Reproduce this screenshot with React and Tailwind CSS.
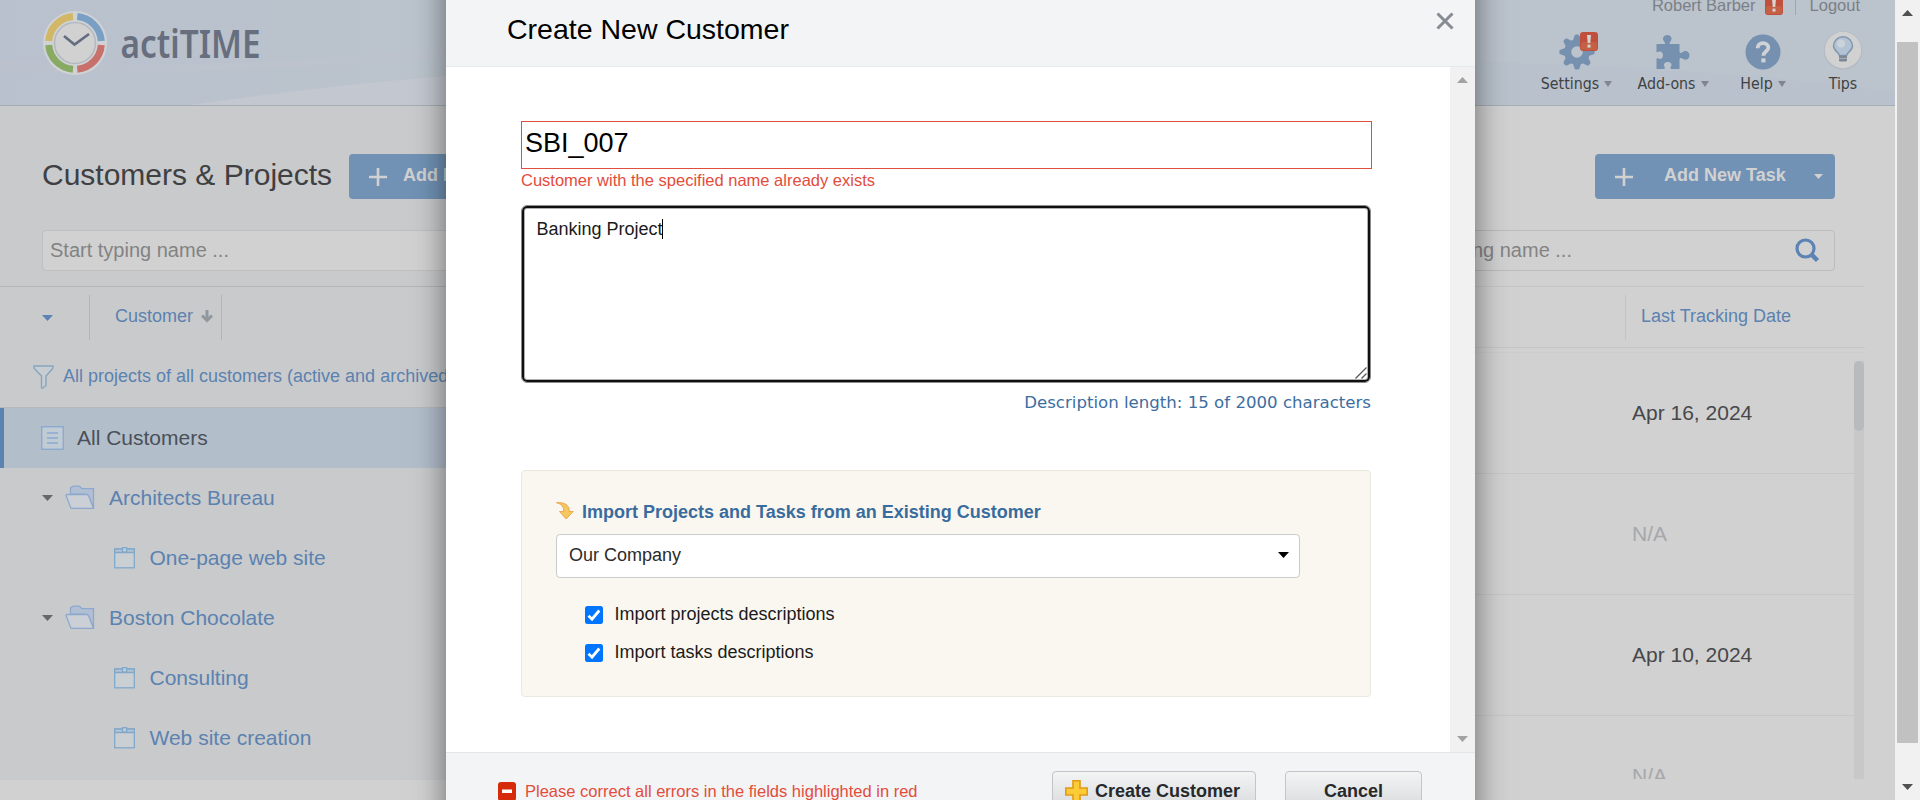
import React from "react";

const Tri = ({ w = 11, h = 6, color = "#5b84b5", up = false }) => (
  <svg width={w} height={h} viewBox="0 0 11 6" preserveAspectRatio="none" className="block shrink-0">
    <path d={up ? "M0 6L5.5 0L11 6Z" : "M0 0H11L5.5 6Z"} fill={color} />
  </svg>
);

const Logo = () => (
  <svg width="240" height="86" viewBox="0 0 240 86" className="block overflow-visible">
    <circle cx="32" cy="35" r="32" fill="#d0d3d5" />
    <g fill="none" strokeWidth="7">
      <path d="M34.3 8.6A26.4 26.4 0 0 1 58.3 33" stroke="#79a0c4" />
      <path d="M58.3 37A26.4 26.4 0 0 1 34.3 61.3" stroke="#c8706b" />
      <path d="M30 61.3A26.4 26.4 0 0 1 5.7 37" stroke="#89aa63" />
      <path d="M5.7 33A26.4 26.4 0 0 1 30 8.6" stroke="#d2b766" />
    </g>
    <circle cx="32" cy="35" r="20.5" fill="#d1d1d1" stroke="#b3b8bf" strokeWidth="1.5" />
    <path d="M21 28L31.5 36.5L46 26" fill="none" stroke="#626d80" strokeWidth="2.6" />
    <text x="77.5" y="50" fontFamily="'Noto Sans', sans-serif" fontWeight="600" fontSize="40.5" textLength="140" lengthAdjust="spacingAndGlyphs" fill="#676e7e">
      actiTIME
    </text>
  </svg>
);

const Alert = () => (
  <svg width="18" height="19" viewBox="0 0 18 19" className="block">
    <rect width="18" height="19" rx="3" fill="#c0503d" />
    <rect y="10" x="1" width="16" height="8" rx="2" fill="#c46044" />
    <path d="M7 3H11L10.3 11H7.7Z" fill="#d6d2d0" />
    <rect x="7.5" y="12.6" width="3" height="3" fill="#d6d2d0" />
  </svg>
);

const Gear = () => (
  <svg width="36" height="36" viewBox="-18 -18 36 36" className="block">
    <g fill="#7690af">
      {[0, 45, 90, 135, 180, 225, 270, 315].map((a) => (
        <path key={a} transform={`rotate(${a})`} d="M-4.6 -10L-2.6 -16Q-2.2 -17.6 -1 -17.6H1Q2.2 -17.6 2.6 -16L4.6 -10Z" />
      ))}
    </g>
    <circle r="9.3" fill="none" stroke="#7690af" strokeWidth="7" />
  </svg>
);

const Puzzle = () => (
  <svg width="34" height="36" viewBox="0 0 34 36" className="block">
    <path
      fill="#7690af"
      d="M0.5 10H8.6C9.8 10 9 8.3 8 7.2C5.6 4.2 8 1 11.3 1S17 4.2 14.6 7.2C13.6 8.3 12.8 10 14 10H23.5V17.6C23.5 19.4 25.4 19 26.4 18.2C29.4 15.8 33.5 17.6 33.5 21.4S29.4 27 26.4 24.6C25.4 23.8 23.5 23.6 23.5 25.4V35H15.4C14.2 35 14.4 33.6 15 32.6C16.6 30 14.2 28 11.8 28S6.8 30 8.4 32.6C9 33.6 9.2 35 8 35H0.5V25C0.5 24 1.6 24.2 2.6 24.6C5.2 25.8 7 23.6 7 21.2S5 16.6 2.6 17.8C1.6 18.2 0.5 18.6 0.5 17.6Z"
    />
  </svg>
);

const HelpIcon = () => (
  <svg width="36" height="36" viewBox="0 0 36 36" className="block">
    <circle cx="18" cy="18" r="17.5" fill="#7690af" />
    <path d="M12.6 14.3C12.6 10.8 15 9.2 18 9.2S23.4 11 23.4 13.8C23.4 17.2 18.4 17.4 18.4 21.8" fill="none" stroke="#d0d3d5" strokeWidth="3.8" />
    <rect x="16.3" y="24.4" width="4.2" height="4" fill="#d0d3d5" />
  </svg>
);

const Bulb = () => (
  <svg width="40" height="40" viewBox="0 0 40 40" className="-mt-[3px] block">
    <circle cx="20" cy="20.5" r="19.2" fill="#b3bac1" />
    <circle cx="20" cy="20" r="18.2" fill="#d1d1d1" />
    <path d="M16.4 25.5C16 22.5 10.5 20.5 10.5 16A9.5 9.2 0 0 1 29.5 16C29.5 20.5 24 22.5 23.6 25.5Z" fill="#b4c3d3" stroke="#8098b0" strokeWidth="1.5" />
    <circle cx="18" cy="13.5" r="4" fill="#cbd3da" />
    <rect x="16" y="25.5" width="8" height="6" rx="1" fill="#7c8894" />
    <path d="M16 28.5H24" stroke="#a5adb5" />
  </svg>
);

const Plus = () => (
  <svg width="18" height="18" viewBox="0 0 18 18" className="block shrink-0">
    <path d="M9 0V18M0 9H18" stroke="#d1d1d1" strokeWidth="2.6" />
  </svg>
);

const Folder = () => (
  <svg width="30" height="25" viewBox="0 0 30 25" className="block shrink-0">
    <path d="M5.5 9V4Q5.5 1.700 7.5 1.700L8.5 1.2H14.5L17 3.600H28.5V23.4L24 12L22 9.3Z" fill="#b1bfd3" stroke="#8fa8cf" strokeWidth="1.3" />
    <path d="M1 10.5Q1 9.5 2 9.5H21.5Q23 9.5 23.6 10.7L28.5 23.4H6Z" fill="#cad0d6" stroke="#8fa8cf" strokeWidth="1.3" />
  </svg>
);

const Clip = () => (
  <svg width="21" height="22" viewBox="0 0 21 22" className="block shrink-0">
    <rect x="0.7" y="2" width="19.6" height="18.8" fill="#cacfd3" stroke="#82a8c9" strokeWidth="1.3" />
    <path d="M0.7 2H20.3V5.5H0.7Z" fill="#b2c4d3" stroke="#82a8c9" strokeWidth="1.3" />
    <rect x="8.5" y="0.7" width="4.2" height="4.3" fill="#c4ced6" stroke="#82a8c9" strokeWidth="1.3" />
  </svg>
);

const NavItem = ({ label, icon, w, arrow = true }) => (
  <div className={`flex flex-col items-center ${w}`}>
    <div className="flex h-10 items-center pt-[3px]">{icon}</div>
    <div className="mt-0.5 flex items-center gap-[5px] font-['DejaVu_Sans_Condensed','DejaVu_Sans',sans-serif] text-[15.8px] leading-[24px] whitespace-nowrap text-[#3f4144]">
      {label}
      {arrow && <Tri w={8} h={6} color="#80868d" />}
    </div>
  </div>
);

const Header = () => (
  <header className="relative h-[106px] overflow-hidden border-b border-[#a6adb5] bg-[#bbc3cc]">
    <svg className="absolute inset-0 h-[105px] w-[1895px]" viewBox="0 0 1895 105">
      <rect width="420" height="105" fill="url(#hg)" />
      <path d="M0 60Q250 72 446 47L560 40V62L446 57Q250 76 0 72Z" fill="#c0c4ce" opacity=".5" />
      <path d="M190 105Q320 86 446 76L600 66V105Z" fill="#c3c7cf" />
      <path d="M1475 62Q1700 66 1895 92V105H1475Z" fill="#b8c1cb" opacity=".6" />
      <defs>
        <linearGradient id="hg">
          <stop offset="0" stopColor="#b8c1cd" />
          <stop offset="1" stopColor="#bbc3cc" />
        </linearGradient>
      </defs>
    </svg>
    <div className="relative flex justify-between">
      <div className="pt-2 pl-[43px]">
        <Logo />
      </div>
      <div className="flex flex-col pr-[35px]">
        <div className="-mt-[7px] flex h-[24px] items-center justify-end text-[16.5px] text-[#7b8087]">
          <span>Robert Barber</span>
          <span className="ml-[9px]">
            <Alert />
          </span>
          <span className="ml-[12px] h-5 w-px bg-[#a2a6ab]" />
          <span className="ml-[14px]">Logout</span>
        </div>
        <div className="mt-[13px] flex pr-[2px]">
          <NavItem
            label="Settings"
            w="w-[71px]"
            icon={
              <div className="relative">
                <Gear />
                <span className="absolute -top-[2px] left-[21px]">
                  <Alert />
                </span>
              </div>
            }
          />
          <NavItem label="Add-ons" w="ml-[25px] w-[72px]" icon={<Puzzle />} />
          <NavItem label="Help" w="ml-[32px] w-[44px]" icon={<HelpIcon />} />
          <NavItem label="Tips" w="ml-[43px] w-[30px]" arrow={false} icon={<Bulb />} />
        </div>
      </div>
    </div>
  </header>
);

const tree = [
  { type: "folder", label: "Architects Bureau" },
  { type: "project", label: "One-page web site" },
  { type: "folder", label: "Boston Chocolate" },
  { type: "project", label: "Consulting" },
  { type: "project", label: "Web site creation" },
];

const LeftPanel = () => (
  <section className="h-[674px] w-[900px] shrink-0 bg-[#c9cacc]">
    <div className="flex h-[93px] items-end pl-[42px]">
      <h1 className="w-[307px] pb-[2px] text-[30px] leading-[45px] text-[#3f4041]">Customers &amp; Projects</h1>
      <button className="flex h-[45px] w-[220px] items-center rounded bg-[#7192b5] pl-[20px] text-[18px] font-bold text-[#d1d1d1]">
        <Plus />
        <span className="ml-[16px] pb-[2px]">Add New</span>
      </button>
    </div>
    <div className="mt-[31px] ml-[42px] flex h-[41px] w-[460px] items-center rounded border border-[#bebfc0] bg-[#d1d1d1] pb-[2px] pl-[7px] text-[20px] text-[#838383]">
      Start typing name ...
    </div>
    <div className="mt-[15px] flex h-[61px] items-start border-t border-[#b4b5b7] pt-2 text-[18px] text-[#5b82b0]">
      <div className="flex h-[45px] w-[90px] items-center border-r border-[#b3b4b6] pl-[42px]">
        <Tri />
      </div>
      <div className="flex h-[45px] w-[132px] items-center justify-end gap-[8px] border-r border-[#b3b4b6] pr-2 pb-[2px]">
        Customer
        <svg width="12" height="13" viewBox="0 0 12 13">
          <path d="M6 0V10M1 5.5L6 10.5L11 5.5" fill="none" stroke="#90979e" strokeWidth="3" />
        </svg>
      </div>
    </div>
    <div className="flex h-[61px] items-center border-b border-[#b6b8ba] pb-[1px] pl-[33px] text-[18px] whitespace-nowrap text-[#5b82b0]">
      <svg width="21" height="24" viewBox="0 0 21 24" className="mr-[9px]">
        <path d="M1 1H20Q20.3 3 19 4.2L13 11V20.5L9.5 23.2Q8.5 23.5 8.5 22V11L2 4.2Q0.7 3 1 1Z" fill="#c7cdd1" stroke="#86a5bd" strokeWidth="1.4" />
      </svg>
      All projects of all customers (active and archived)
    </div>
    <div className="flex h-[60px] items-center border-l-4 border-[#5b83b1] bg-[#b3becb] pl-[37px] text-[21px] text-[#4a5058]">
      <svg width="23" height="24" viewBox="0 0 23 24" className="mr-[13px]">
        <rect x="0.7" y="0.7" width="21.6" height="22.6" fill="#c0cbd5" stroke="#8ca9d0" strokeWidth="1.4" />
        <path d="M6 7H17M6 12H17M6 17H17" stroke="#8ca9d0" strokeWidth="1.4" />
      </svg>
      <span className="pb-[1px]">All Customers</span>
    </div>
    {tree.map((n) => (
      <div key={n.label} className="flex h-[60px] items-center pb-[1px] text-[21px] text-[#5b82b0]">
        {n.type === "folder" ? (
          <div className="flex items-center pl-[42px]">
            <Tri color="#66686a" />
            <span className="mr-[14px] ml-[12px]">
              <Folder />
            </span>
            {n.label}
          </div>
        ) : (
          <div className="flex items-center pl-[114px]">
            <Clip />
            <span className="ml-[14.5px]">{n.label}</span>
          </div>
        )}
      </div>
    ))}
  </section>
);

const dates = ["Apr 16, 2024", "N/A", "Apr 10, 2024", "N/A"];

const RightPanel = () => (
  <section className="h-[694px] w-[995px] bg-[#d1d1d1]">
    <div className="flex h-[93px] items-end justify-end pr-[60px]">
      <button className="flex h-[45px] w-[240px] items-center rounded bg-[#7192b5] pr-3 pl-[20px] text-[18px] font-bold text-[#d1d1d1]">
        <Plus />
        <span className="ml-[31px] flex-1 pb-[2px] text-left whitespace-nowrap">Add New Task</span>
        <Tri w={9} h={5} color="#d1d1d1" />
      </button>
    </div>
    <div className="mt-[31px] ml-[485px] flex h-[41px] w-[450px] items-center justify-between rounded border border-[#bcbcbc] pr-[14px] pb-[1px] pl-[7px] text-[20px] text-[#838383]">
      Start typing name ...
      <svg width="25" height="25" viewBox="0 0 25 25" className="mt-[1px]">
        <circle cx="10.5" cy="10.5" r="8.5" fill="none" stroke="#5b84b5" strokeWidth="3.2" />
        <path d="M16.5 16.5L22.5 22.5" stroke="#5b84b5" strokeWidth="4.5" />
      </svg>
    </div>
    <div className="mt-[15px] mr-[30px] flex h-[62px] items-start justify-end border-y border-[#c6c6c6] pt-2">
      <div className="flex h-[45px] w-[240px] items-center border-l border-[#c3c3c3] pb-[2px] pl-[15px] text-[18px] text-[#5b82b0]">Last Tracking Date</div>
    </div>
    <div className="mt-1 mr-[31px] flex h-[427px] overflow-hidden border-t border-[#cdcdcd]">
      <div className="flex-1">
        {dates.map((d, i) => (
          <div key={i} className="flex h-[121px] items-center justify-end border-b border-[#c7c7c7]">
            <span className={`w-[222px] pb-px text-[21px] ${d === "N/A" ? "text-[#a6a7ac]" : "text-[#47484a]"}`}>{d}</span>
          </div>
        ))}
      </div>
      <div className="mt-2 w-2.5 bg-[#c8c8c8]">
        <div className="h-[70px] rounded-full bg-[#b7bbbe]" />
      </div>
    </div>
  </section>
);

const Check = ({ label }) => (
  <label className="flex h-[38px] items-center gap-[11.5px] text-[18px] text-[#1b1b1b]">
    <svg width="18" height="18" viewBox="0 0 18 18">
      <rect width="18" height="18" rx="2.5" fill="#0075ff" />
      <path d="M3.5 9.8L7 13.2L14.3 4.5" fill="none" stroke="#fff" strokeWidth="2.8" />
    </svg>
    <span className="pb-px">{label}</span>
  </label>
);

const Modal = () => (
  <div className="absolute top-0 left-[446px] flex h-[800px] w-[1029px] flex-col overflow-hidden bg-white">
    <div className="flex h-[67px] shrink-0 items-start justify-between border-b border-[#e5e9ea] bg-[#f3f4f6] pr-[21px] pl-[61px]">
      <h2 className="pt-[8.5px] text-[28.5px] leading-[40px] text-black">Create New Customer</h2>
      <svg width="18" height="18" viewBox="0 0 18 18" className="mt-3">
        <path d="M1.5 1.5L16.5 16.5M16.5 1.5L1.5 16.5" stroke="#868b94" strokeWidth="3" />
      </svg>
    </div>
    <div className="flex h-[685px] shrink-0">
      <div className="w-[1004px] pt-[54px] pl-[75px]">
        <div className="h-[48px] w-[851px] border border-[#de4f3d] pl-[3px] text-[27px] leading-[43px] text-black">SBI_007</div>
        <div className="h-[36px] text-[16.5px] leading-[22px] text-[#e34c3b]">Customer with the specified name already exists</div>
        <div className="relative flex h-[178px] w-[850px] items-start rounded-[6px] border border-[#8c8c8c] px-[14.5px] pt-[13px] text-[18px] leading-[20px] text-[#1b1b1b] shadow-[inset_0_0_0_2px_#101010,inset_0_0_0_3px_#b0b0b0]">
          Banking Project
          <span className="-ml-px h-5 w-px bg-black" />
          <svg width="12" height="12" viewBox="0 0 12 12" className="absolute right-[3px] bottom-[3px]">
            <path d="M0.5 11.5L11.5 0.5M6.5 11.5L11.5 6.5" stroke="#555" strokeWidth="1.3" />
          </svg>
        </div>
        <div className="mt-[9px] w-[850px] text-right font-['DejaVu_Sans',sans-serif] text-[16.6px] leading-[22px] text-[#3c6e9f]">Description length: 15 of 2000 characters</div>
        <div className="mt-[56px] h-[227px] w-[850px] rounded border border-[#ebe8e0] bg-[#faf7f0] pt-[30px] pl-[34px]">
          <div className="flex h-[24px] items-center pb-px text-[18px] font-bold text-[#386c9e]">
            <svg width="18" height="18" viewBox="0 0 18 18" className="mr-[8px] mb-[3px]">
              <path d="M0.5 0.7C9 0 13.5 3.5 13.3 9.5H17.2L10.2 17L3.5 9.5H7.6C8 5.5 6.5 2.2 0.5 0.7Z" fill="#f6c660" stroke="#eca74f" strokeWidth="1" />
            </svg>
            Import Projects and Tasks from an Existing Customer
          </div>
          <div className="mt-[9px] flex h-[44px] w-[744px] items-center justify-between rounded border border-[#cbcbcb] bg-white pr-[10px] pb-[2px] pl-[12px] text-[18px] text-[#2b2b2b]">
            Our Company
            <Tri color="#000" />
          </div>
          <div className="mt-[18px] pl-[29px]">
            <Check label="Import projects descriptions" />
            <Check label="Import tasks descriptions" />
          </div>
        </div>
      </div>
      <div className="flex w-[25px] flex-col items-center justify-between bg-[#f1f1f1] pt-[10px] pb-[10px]">
        <Tri color="#a3a3a3" up />
        <Tri color="#a3a3a3" />
      </div>
    </div>
    <div className="flex h-[78px] shrink-0 items-start border-t border-[#e3e5e6] bg-[#f3f4f6] pt-[18px] pl-[52px]">
      <div className="flex w-[554px] items-start pt-[8px] text-[16.5px] leading-[24px] text-[#e34c3b]">
        <svg width="18" height="19" viewBox="0 0 18 19" className="mt-[3px] mr-[9px]">
          <rect width="18" height="19" rx="3" fill="#d52b0b" />
          <rect x="4" y="7.5" width="10" height="3.5" fill="#fff" />
        </svg>
        Please correct all errors in the fields highlighted in red
      </div>
      <button className="flex h-[45px] w-[204px] items-center rounded border border-[#c3c5c7] bg-gradient-to-b from-[#f3f4f4] to-[#d5d6d8] pb-1 pl-[12px] text-[18px] font-bold text-[#26292b]">
        <svg width="23" height="23" viewBox="0 0 23 23" className="mr-[7px]">
          <path d="M8 0.8H15V8H22.2V15H15V22.2H8V15H0.8V8H8Z" fill="#fccb35" stroke="#e19c14" strokeWidth="1.6" />
        </svg>
        Create Customer
      </button>
      <button className="ml-[29px] h-[45px] w-[137px] rounded border border-[#c3c5c7] bg-gradient-to-b from-[#f3f4f4] to-[#d5d6d8] pb-1 text-[18px] font-bold text-[#26292b]">Cancel</button>
    </div>
  </div>
);

export default function App() {
  return (
    <div className="relative flex h-[800px] w-[1920px] overflow-hidden bg-[#d1d1d1] font-['Liberation_Sans',Arial,sans-serif]">
      <main className="w-[1895px]">
        <Header />
        <div className="flex">
          <LeftPanel />
          <RightPanel />
        </div>
      </main>
      <div className="flex w-[25px] flex-col items-center bg-[#f1f1f1] pt-[10px]">
        <Tri color="#505050" up />
        <div className="mt-[26px] h-[701px] w-[21px] bg-[#c1c1c1]" />
        <div className="mt-[41px]">
          <Tri color="#505050" />
        </div>
      </div>
      <div className="absolute top-0 left-0 h-[800px] w-[1895px] overflow-hidden">
        <div className="absolute -top-[40px] left-[446px] h-[880px] w-[1029px] shadow-[0_0_30px_rgba(0,0,0,0.5)]" />
      </div>
      <Modal />
    </div>
  );
}
